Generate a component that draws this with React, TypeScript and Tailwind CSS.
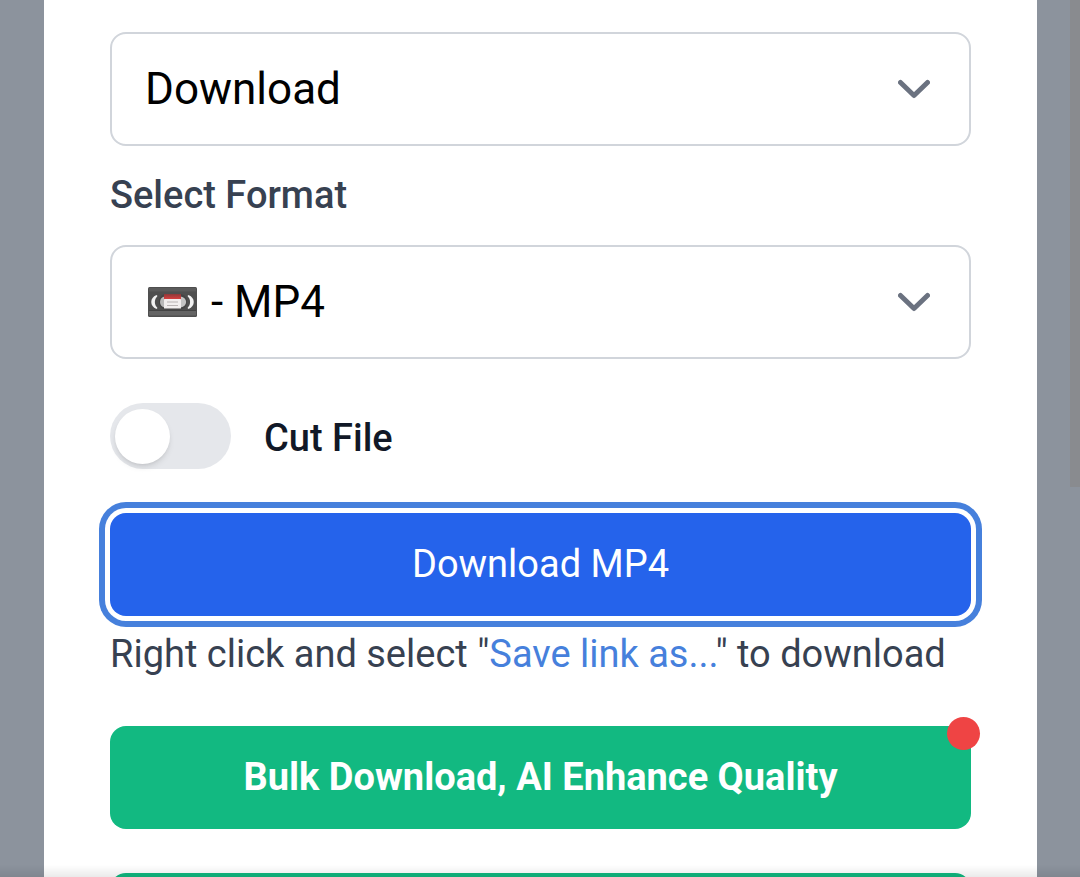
import { useState } from "react";

function ChevronDown() {
  return (
    <svg
      viewBox="0 0 32 20"
      className="pointer-events-none absolute right-[41px] top-1/2 h-5 w-8 -translate-y-1/2"
      fill="none"
      stroke="#6b7280"
      strokeWidth="5"
      strokeLinecap="round"
      strokeLinejoin="round"
      aria-hidden="true"
    >
      <path d="M2.500 3.500 L16 16.500 L29.500 3.500" />
    </svg>
  );
}

function CassetteIcon() {
  return (
    <svg
      viewBox="0 0 49 30"
      className="pointer-events-none absolute left-[38px] top-1/2 h-[30px] w-[49px] -translate-y-1/2"
      aria-hidden="true"
    >
      <defs>
        <linearGradient id="tape" x1="0" x2="0" y1="0" y2="1">
          <stop offset="0" stopColor="#8c3a3a" />
          <stop offset="1" stopColor="#e04040" />
        </linearGradient>
      </defs>
      <rect width="49" height="30" rx="1.500" fill="#4f4f4f" />
      <rect x="1" y="1" width="47" height="3.500" fill="#5b5b5b" />
      <rect x="1" y="24" width="47" height="4.500" fill="#646464" />
      <rect x="1" y="23" width="47" height="1" fill="#434343" />
      <rect x="11" y="7" width="28" height="15.500" rx="7" fill="#454545" />
      <path d="M8.500 8 C1.500 10.500 1.500 19.500 8.500 22 L9.500 21 C6 17.500 6 12.500 9.500 9 Z" fill="#f2f2f2" />
      <path d="M40.500 8 C47.500 10.500 47.500 19.500 40.500 22 L39.500 21 C43 17.500 43 12.500 39.500 9 Z" fill="#f2f2f2" />
      <path d="M16.500 9.500 C10.500 10.500 10.500 19.500 16.500 20.500 Z" fill="#b9b9b9" />
      <path d="M32.500 9.500 C40 10.500 40 19.500 32.500 20.500 Z" fill="#c4c4c4" />
      <rect x="16" y="7" width="17" height="5.500" fill="url(#tape)" />
      <rect x="16" y="12" width="17" height="9.500" rx="0.500" fill="#f1eeee" />
      <path d="M19 15 H30 M19 18.500 H30" stroke="#b9b4b4" strokeWidth="1" />
    </svg>
  );
}

export default function App() {
  const [action, setAction] = useState("download");
  const [format, setFormat] = useState("mp4");
  const [cut, setCut] = useState(false);

  return (
    <div className="h-screen overflow-hidden bg-[#8c939d] pl-11 pr-[43px] font-['Roboto',sans-serif]">
      {/* Modal panel */}
      <main className="min-h-screen bg-white px-[66px] pt-8">
        <div className="relative">
          <select
            aria-label="Action"
            value={action}
            onChange={(e) => setAction(e.target.value)}
            className="block h-[114px] w-full appearance-none rounded-2xl border-2 border-[#d1d5db] bg-white pl-[33px] pr-20 text-[44px] text-black"
          >
            <option value="download">Download</option>
          </select>
          <ChevronDown />
        </div>

        <label
          htmlFor="format"
          className="my-[22px] block text-[38px] font-medium leading-[55px] text-[#374151]"
        >
          Select Format
        </label>
        <div className="relative">
          <select
            id="format"
            value={format}
            onChange={(e) => setFormat(e.target.value)}
            className="block h-[114px] w-full appearance-none rounded-2xl border-2 border-[#d1d5db] bg-white pl-[99px] pr-20 text-[44px] text-black"
          >
            <option value="mp4">- MP4</option>
          </select>
          <CassetteIcon />
          <ChevronDown />
        </div>

        <label className="mt-11 flex w-fit cursor-pointer items-center gap-[33px]">
          <input
            type="checkbox"
            checked={cut}
            onChange={(e) => setCut(e.target.checked)}
            className="peer sr-only"
          />
          <span className="flex h-[66px] w-[121px] items-center rounded-full bg-[#e5e7eb] px-[5px] peer-checked:justify-end peer-checked:bg-blue-600">
            <span className="size-[55px] rounded-full bg-white shadow-md" />
          </span>
          <span className="pt-1 text-[38px] font-medium leading-[55px] text-[#111827]">
            Cut File
          </span>
        </label>

        <button className="mt-11 block h-[103px] w-full rounded-2xl bg-[#2563eb] text-[38px] text-white ring-6 ring-[#4680dc] ring-offset-5">
          Download MP4
        </button>
        <p className="mt-[11px] whitespace-nowrap text-[38px] leading-[55px] text-[#374151]">
          Right click and select "
          <a href="#save" className="text-[#4680dc]">
            Save link as...
          </a>
          " to download
        </p>

        <button className="relative mt-11 block h-[103px] w-full rounded-2xl bg-[#12b981] text-[38px] font-bold text-white">
          Bulk Download, AI Enhance Quality
          <span className="absolute -right-[9px] -top-[9px] size-[33px] rounded-full bg-[#ef4444]" />
        </button>
        <button className="mt-11 block h-[103px] w-full rounded-2xl bg-[#12b981]" />
      </main>

      {/* Scroll thumb and bottom edge shade */}
      <div className="fixed right-0 top-0 h-[487px] w-[10px] bg-[#898b8f]" />
      <div className="pointer-events-none fixed inset-x-0 bottom-0 h-3 bg-linear-to-b from-transparent to-black/8" />
    </div>
  );
}
